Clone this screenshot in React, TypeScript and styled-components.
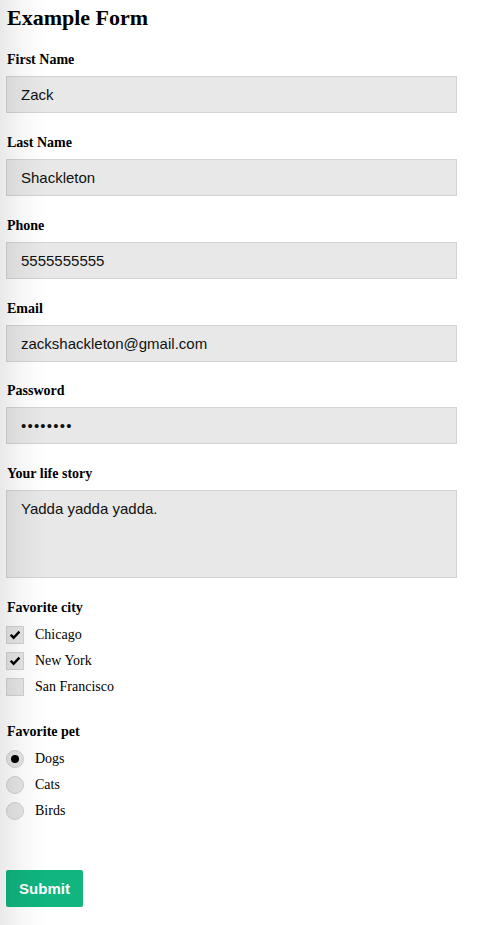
import React from "react";
import styled, { createGlobalStyle } from "styled-components";

const GlobalStyle = createGlobalStyle`
  html, body { margin: 0; padding: 0; background: #ffffff; }
  body { font-family: "Liberation Serif", "Times New Roman", serif; color: #000; }
  * { box-sizing: border-box; }
`;

const EdgeShade = styled.div`
  position: fixed;
  top: 0;
  left: 0;
  bottom: 0;
  width: 48px;
  pointer-events: none;
  background: linear-gradient(to right, rgba(0, 0, 0, 0.085), rgba(0, 0, 0, 0.03) 22px, rgba(0, 0, 0, 0) 46px);
`;

const Page = styled.form`
  display: flex;
  flex-direction: column;
  padding: 6px 0 18px 6px;
  width: 457px;
`;

const Title = styled.h2`
  margin: 0 0 22px 1px;
  font-size: 22px;
  line-height: 24px;
  font-weight: bold;
`;

const Field = styled.div`
  display: flex;
  flex-direction: column;
  margin-bottom: ${(p: { $gap?: number }) => (p.$gap ?? 21.85)}px;
`;

const Label = styled.label`
  display: block;
  margin-left: 1px;
  font-size: 14px;
  line-height: 16px;
  font-weight: bold;
`;

const Input = styled.input`
  display: block;
  margin-top: 8px;
  width: 451px;
  height: 37px;
  padding: 0 14px;
  border: 1px solid #d3d3d3;
  border-radius: 0;
  background: #e8e8e8;
  font-family: "Liberation Sans", Arial, sans-serif;
  font-size: 15px;
  color: #111;
  outline: none;
  &[type="password"] { letter-spacing: 1.2px; }
`;

const TextArea = styled.textarea`
  display: block;
  margin-top: 8px;
  width: 451px;
  height: 88px;
  padding: 9px 14px;
  border: 1px solid #d3d3d3;
  border-radius: 0;
  background: #e8e8e8;
  font-family: "Liberation Sans", Arial, sans-serif;
  font-size: 15px;
  line-height: 17px;
  color: #111;
  resize: none;
  outline: none;
`;

const Options = styled.div`
  display: flex;
  flex-direction: column;
  margin-top: 6px;
`;

const Option = styled.label`
  display: flex;
  align-items: center;
  height: 26px;
  font-size: 14px;
  cursor: pointer;
`;

const Box = styled.span`
  display: flex;
  align-items: center;
  justify-content: center;
  width: 18px;
  height: 18px;
  margin-right: 11px;
  background: #e6e6e6;
  border: 1px solid #d2d2d2;
  border-radius: ${(p: { $round?: boolean }) => (p.$round ? "50%" : "0")};
`;

const Dot = styled.span`
  width: 8px;
  height: 8px;
  border-radius: 50%;
  background: #000;
`;

const Hidden = styled.input`
  position: absolute;
  opacity: 0;
  width: 0;
  height: 0;
  margin: 0;
`;

const SubmitButton = styled.button`
  align-self: flex-start;
  width: 77px;
  height: 37px;
  border: none;
  border-radius: 2px;
  background: #10b57f;
  color: #fff;
  font-family: "Liberation Sans", Arial, sans-serif;
  font-size: 15px;
  font-weight: bold;
  cursor: pointer;
`;

const Check = () => (
  <svg width="12" height="11" viewBox="0 0 12 11">
    <path d="M0.8 5.6 L2.6 3.9 L4.6 5.9 L9.6 0.8 L11.3 2.5 L4.6 9.4 Z" fill="#000" />
  </svg>
);

const textFields = [
  { id: "first", label: "First Name", value: "Zack", type: "text" },
  { id: "last", label: "Last Name", value: "Shackleton", type: "text" },
  { id: "phone", label: "Phone", value: "5555555555", type: "tel" },
  { id: "email", label: "Email", value: "zackshackleton@gmail.com", type: "email" },
  { id: "password", label: "Password", value: "password", type: "password" },
];

const cities = [
  { name: "Chicago", checked: true },
  { name: "New York", checked: true },
  { name: "San Francisco", checked: false },
];

const pets = [
  { name: "Dogs", checked: true },
  { name: "Cats", checked: false },
  { name: "Birds", checked: false },
];

export default function App() {
  return (
    <>
      <GlobalStyle />
      <Page onSubmit={(e) => e.preventDefault()}>
        <Title>Example Form</Title>
        {textFields.map((f) => (
          <Field key={f.id}>
            <Label htmlFor={f.id}>{f.label}</Label>
            <Input id={f.id} type={f.type} defaultValue={f.value} />
          </Field>
        ))}
        <Field>
          <Label htmlFor="story">Your life story</Label>
          <TextArea id="story" defaultValue="Yadda yadda yadda." />
        </Field>
        <Field $gap={24}>
          <Label as="div">Favorite city</Label>
          <Options>
            {cities.map((c) => (
              <Option key={c.name}>
                <Hidden type="checkbox" defaultChecked={c.checked} />
                <Box>{c.checked && <Check />}</Box>
                {c.name}
              </Option>
            ))}
          </Options>
        </Field>
        <Field $gap={46}>
          <Label as="div">Favorite pet</Label>
          <Options>
            {pets.map((p) => (
              <Option key={p.name}>
                <Hidden type="radio" name="pet" defaultChecked={p.checked} />
                <Box $round>{p.checked && <Dot />}</Box>
                {p.name}
              </Option>
            ))}
          </Options>
        </Field>
        <SubmitButton type="submit">Submit</SubmitButton>
      </Page>
      <EdgeShade />
    </>
  );
}
